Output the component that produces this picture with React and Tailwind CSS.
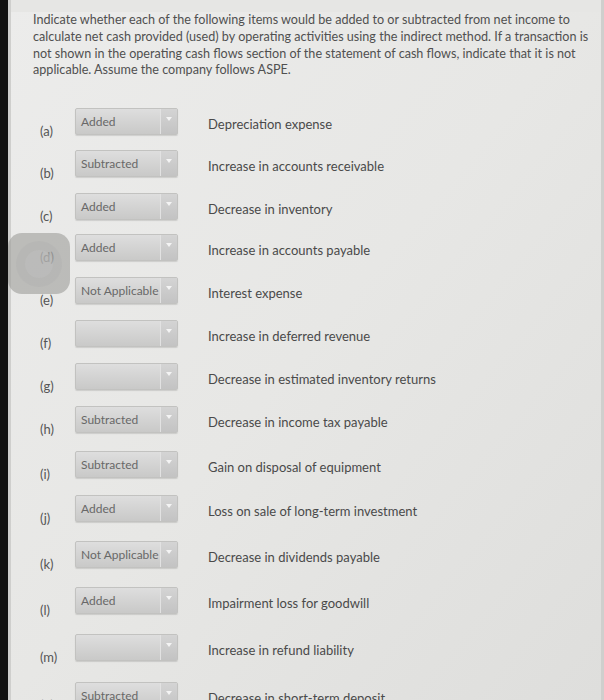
import React from "react";

const rows = [
  { k: "(a)", v: "Added", d: "Depreciation expense", h: "h-[42px]" },
  { k: "(b)", v: "Subtracted", d: "Increase in accounts receivable", h: "h-[43px]" },
  { k: "(c)", v: "Added", d: "Decrease in inventory", h: "h-[41px]" },
  { k: "(d)", v: "Added", d: "Increase in accounts payable", h: "h-[43px]" },
  { k: "(e)", v: "Not Applicable", d: "Interest expense", h: "h-[43px]" },
  { k: "(f)", v: "", d: "Increase in deferred revenue", h: "h-[43px]" },
  { k: "(g)", v: "", d: "Decrease in estimated inventory returns", h: "h-[43px]" },
  { k: "(h)", v: "Subtracted", d: "Decrease in income tax payable", h: "h-[45px]" },
  { k: "(i)", v: "Subtracted", d: "Gain on disposal of equipment", h: "h-[44px]" },
  { k: "(j)", v: "Added", d: "Loss on sale of long-term investment", h: "h-[46px]" },
  { k: "(k)", v: "Not Applicable", d: "Decrease in dividends payable", h: "h-[46px]" },
  { k: "(l)", v: "Added", d: "Impairment loss for goodwill", h: "h-[47px]" },
  { k: "(m)", v: "", d: "Increase in refund liability", h: "h-[48px]" },
  { k: "(n)", v: "Subtracted", d: "Decrease in short-term deposit", h: "h-[48px]" },
];

function Select({ value }) {
  return (
    <div className="flex h-[27px] w-[103px] shrink-0 rounded-[2px] border border-[#c2c2c0] bg-gradient-to-b from-[#dedede] to-[#c9c9c8] shadow-[0_1px_1px_rgba(0,0,0,0.12)]">
      <div className="flex flex-1 items-center pl-[5px] text-[12px] text-[#686868]">
        {value}
      </div>
      <div className="flex w-[17px] justify-center border-l border-[#e2e2e2] bg-gradient-to-b from-[#d4d4d4] to-[#c3c3c3] pt-[8px]">
        <svg width="6" height="4" viewBox="0 0 6 4">
          <path d="M0 0 L6 0 L3 4 Z" fill="#f4f4f4" />
        </svg>
      </div>
    </div>
  );
}

export default function App() {
  return (
    <div
      className="relative flex h-[700px] w-[604px] overflow-hidden bg-black"
      style={{ fontFamily: "Lato, 'Open Sans', sans-serif" }}
    >
      <div className="w-[8px] shrink-0 bg-[#111]" />
      <div className="flex flex-1 flex-col border-l-[3px] border-r-[3px] border-[#cfcfcd] bg-gradient-to-br from-[#ececeb] via-[#e7e7e5] to-[#dededc]">
        <div className="h-[12px] shrink-0 bg-[#e6e6e4]" />
        <p className="ml-[22px] h-[76px] text-[12.6px] leading-[16.8px] text-[#505050]">
          Indicate whether each of the following items would be added to or subtracted from net income to
          <br />
          calculate net cash provided (used) by operating activities using the indirect method. If a transaction is
          <br />
          not shown in the operating cash flows section of the statement of cash flows, indicate that it is not
          <br />
          applicable. Assume the company follows ASPE.
        </p>
        <div className="mt-[29px] flex flex-col">
          {rows.map((r) => (
            <div key={r.k} className={`flex items-start ${r.h}`}>
              <div className="w-[64px] shrink-0 pl-[29px] pt-[14px] text-[13px] text-[#555]">
                {r.k}
              </div>
              <Select value={r.v} />
              <div className="ml-[30px] pt-[7px] text-[13px] text-[#4a4a4a]">{r.d}</div>
            </div>
          ))}
        </div>
      </div>

      {/* floating assistive touch button */}
      <div className="absolute left-[8px] top-[233px] flex h-[61px] w-[62px] items-center justify-center rounded-[14px] bg-[#9c9c9a]/60">
        <div className="flex h-[46px] w-[46px] items-center justify-center rounded-full bg-[#b0b0ae]/35">
          <div className="h-[28px] w-[28px] rounded-full bg-[#c4c4c2]/35" />
        </div>
      </div>
    </div>
  );
}
